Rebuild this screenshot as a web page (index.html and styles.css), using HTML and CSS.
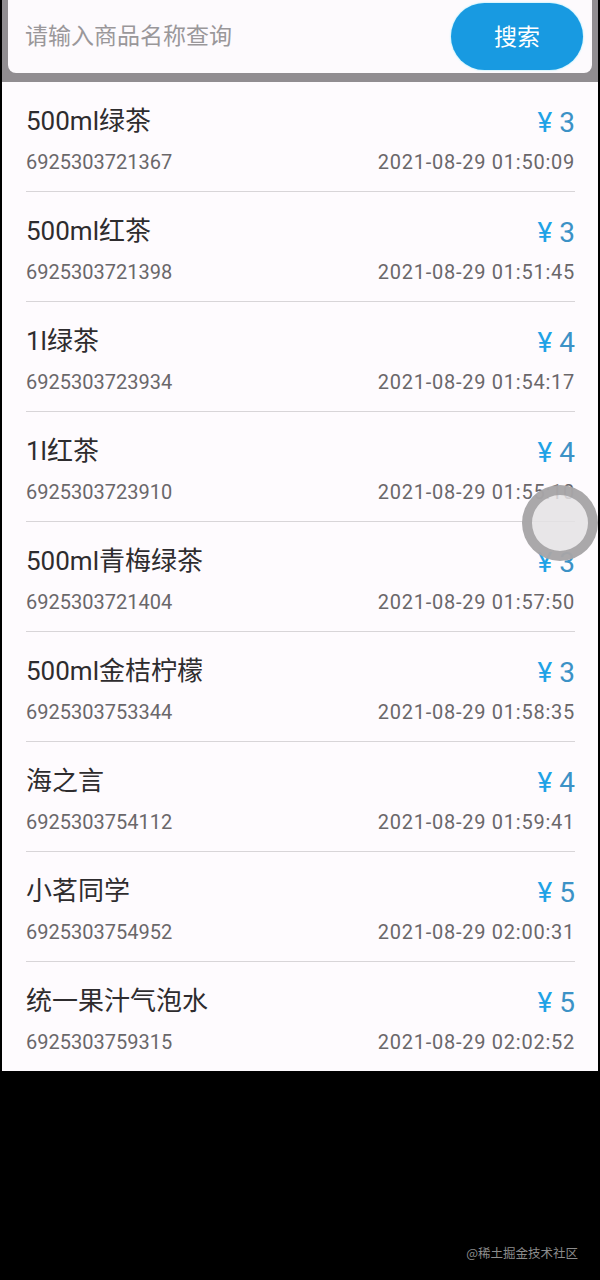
FILE: index.html
```html
<!DOCTYPE html>
<html lang="zh-CN">
<head>
<meta charset="utf-8">
<title>商品查询</title>
<link rel="stylesheet" href="styles.css">
</head>
<body>
<div class="screen">
  <div class="search-bar">
    <div class="search-card">
      <span class="placeholder">请输入商品名称查询</span>
      <button class="search-btn">搜索</button>
    </div>
  </div>
  <ul class="list">
    <li class="row"><div class="line1"><span class="name">500ml绿茶</span><span class="price">¥<span class="num">3</span></span></div><div class="line2"><span>6925303721367</span><span class="date">2021-08-29 01:50:09</span></div></li>
    <li class="row"><div class="line1"><span class="name">500ml红茶</span><span class="price">¥<span class="num">3</span></span></div><div class="line2"><span>6925303721398</span><span class="date">2021-08-29 01:51:45</span></div></li>
    <li class="row"><div class="line1"><span class="name">1l绿茶</span><span class="price">¥<span class="num">4</span></span></div><div class="line2"><span>6925303723934</span><span class="date">2021-08-29 01:54:17</span></div></li>
    <li class="row"><div class="line1"><span class="name">1l红茶</span><span class="price">¥<span class="num">4</span></span></div><div class="line2"><span>6925303723910</span><span class="date">2021-08-29 01:55:10</span></div></li>
    <li class="row"><div class="line1"><span class="name">500ml青梅绿茶</span><span class="price">¥<span class="num">3</span></span></div><div class="line2"><span>6925303721404</span><span class="date">2021-08-29 01:57:50</span></div></li>
    <li class="row"><div class="line1"><span class="name">500ml金桔柠檬</span><span class="price">¥<span class="num">3</span></span></div><div class="line2"><span>6925303753344</span><span class="date">2021-08-29 01:58:35</span></div></li>
    <li class="row"><div class="line1"><span class="name">海之言</span><span class="price">¥<span class="num">4</span></span></div><div class="line2"><span>6925303754112</span><span class="date">2021-08-29 01:59:41</span></div></li>
    <li class="row"><div class="line1"><span class="name">小茗同学</span><span class="price">¥<span class="num">5</span></span></div><div class="line2"><span>6925303754952</span><span class="date">2021-08-29 02:00:31</span></div></li>
    <li class="row"><div class="line1"><span class="name">统一果汁气泡水</span><span class="price">¥<span class="num">5</span></span></div><div class="line2"><span>6925303759315</span><span class="date">2021-08-29 02:02:52</span></div></li>
  </ul>
</div>
<div class="touch"></div>
<div class="footer"><span class="watermark">@稀土掘金技术社区</span></div>
</body>
</html>
```

FILE: styles.css
```css
html, body {
  margin: 0;
  padding: 0;
  background: #000;
  font-family: Roboto, "Noto Sans CJK SC", sans-serif;
}
body {
  position: relative;
  width: 600px;
  height: 1280px;
  overflow: hidden;
}
.screen {
  margin: 0 2px;
  background: #fefbfe;
}
.search-bar {
  background: #918d91;
  padding: 0 6px 9px;
}
.search-card {
  height: 73px;
  background: #fdfafd;
  border-radius: 0 0 8px 8px;
  display: flex;
  align-items: center;
  justify-content: space-between;
  padding: 0 9px 0 17px;
  box-sizing: border-box;
}
.placeholder {
  font-size: 23px;
  color: #9a979a;
  font-family: "Noto Sans CJK SC", sans-serif;
  margin-bottom: 5px;
}
.search-btn {
  width: 132px;
  height: 67px;
  border: none;
  border-radius: 34px;
  background: #189ae1;
  color: #fff;
  font-size: 23px;
  font-family: "Noto Sans CJK SC", sans-serif;
  box-shadow: 0 0 2px #7fe6ff;
  padding: 0 0 4px;
}
.list {
  list-style: none;
  margin: 0;
  padding: 0;
}
.row {
  margin: 0 23px 0 24px;
  height: 110px;
  box-sizing: border-box;
  padding-top: 20px;
  border-bottom: 1px solid #d8d5d8;
}
.row:last-child {
  border-bottom: none;
  height: 109px;
}
.line1 {
  display: flex;
  justify-content: space-between;
  align-items: center;
  height: 32px;
}
.name {
  font-size: 26px;
  color: #2e2c2e;
}
.price {
  font-size: 28px;
  color: #20a2e6;
  display: flex;
  gap: 7px;
  margin-top: 8px;
}
.price .num {
  color: #3c92c6;
}
.line2 {
  display: flex;
  justify-content: space-between;
  margin-top: 16px;
  height: 24px;
  line-height: 24px;
  font-size: 20px;
  color: #6a676a;
}
.date {
  letter-spacing: 0.75px;
}
.touch {
  position: absolute;
  left: 522px;
  top: 485px;
  width: 56px;
  height: 56px;
  border-radius: 50%;
  border: 10px solid rgba(150, 148, 150, 0.75);
  background: rgba(228, 226, 228, 0.85);
}
.footer {
  display: flex;
  justify-content: flex-end;
  padding: 172px 22px 0 0;
}
.watermark {
  font-size: 12.5px;
  color: #8c8c8c;
  font-family: "Noto Sans CJK SC", sans-serif;
}
```
